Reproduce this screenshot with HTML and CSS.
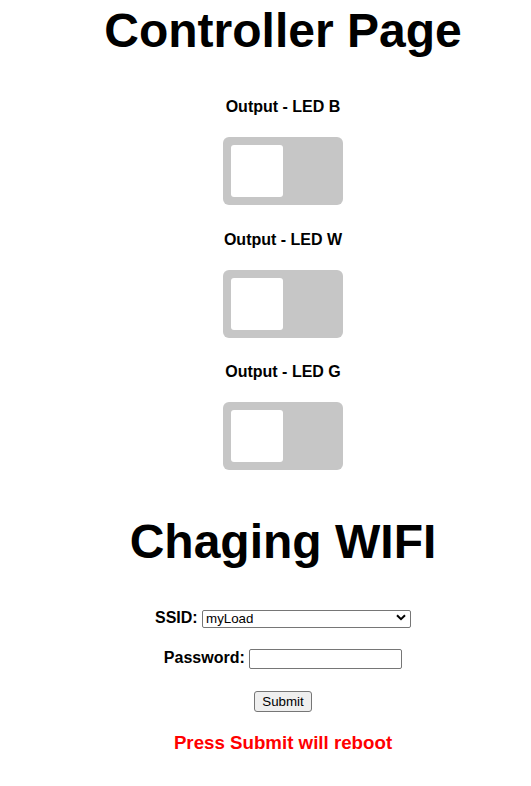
FILE: index.html
```html
<!DOCTYPE html>
<html>
<head>
<meta charset="utf-8">
<title>Controller Page</title>
<link rel="stylesheet" href="styles.css">
</head>
<body>
<div class="page">
  <h2 class="title title-top">Controller Page</h2>

  <h4 class="output-label">Output - LED B</h4>
  <label class="switch"><input type="checkbox" class="switch-input"><span class="slider"></span></label>

  <h4 class="output-label">Output - LED W</h4>
  <label class="switch"><input type="checkbox" class="switch-input"><span class="slider"></span></label>

  <h4 class="output-label">Output - LED G</h4>
  <label class="switch"><input type="checkbox" class="switch-input"><span class="slider"></span></label>

  <h2 class="title title-wifi">Chaging WIFI</h2>

  <form class="wifi-form">
    <div class="row row-ssid">
      <label class="field-label" for="ssid">SSID:</label>
      <span class="select-wrap">
        <select id="ssid" class="ssid-select"><option>myLoad</option></select>
        <svg class="chevron" width="10" height="7" viewBox="0 0 10 7"><path d="M1 1.2 L5 5.2 L9 1.2" fill="none" stroke="#000" stroke-width="2"/></svg>
      </span>
    </div>
    <div class="row row-pass">
      <label class="field-label" for="pass">Password:</label>
      <input id="pass" type="password" class="pass-input">
    </div>
    <div class="row row-submit">
      <button type="button" class="submit-btn">Submit</button>
    </div>
    <h3 class="warning">Press Submit will reboot</h3>
  </form>
</div>
</body>
</html>
```

FILE: styles.css
```css
html, body {
  margin: 0;
  padding: 0;
  background: #ffffff;
}

.page {
  padding-left: 35px;
  text-align: center;
  font-family: "Liberation Sans", Arial, sans-serif;
  color: #000000;
}

.title {
  font-size: 48px;
  font-weight: bold;
  line-height: normal;
  margin: 40px 0;
}

.title-top {
  margin-top: 3px;
}

.title-wifi {
  margin-top: 40px;
  margin-bottom: 39px;
}

.output-label {
  font-size: 16px;
  font-weight: bold;
  line-height: normal;
  margin: 21.3px 0;
}

.switch {
  position: relative;
  display: inline-block;
  width: 120px;
  height: 68px;
}

.switch-input {
  display: none;
}

.slider {
  position: absolute;
  inset: 0;
  background-color: #c6c6c6;
  border-radius: 6px;
}

.slider::before {
  content: "";
  position: absolute;
  left: 8px;
  bottom: 8px;
  width: 52px;
  height: 52px;
  background-color: #ffffff;
  border-radius: 3px;
}

.wifi-form {
  display: flex;
  flex-direction: column;
  align-items: center;
  margin: 0;
}

.row {
  display: flex;
  align-items: center;
  justify-content: center;
  gap: 4.4px;
}

.row-ssid {
  height: 20px;
}

.row-pass {
  height: 21px;
  margin-top: 20px;
}

.row-submit {
  height: 22px;
  margin-top: 21px;
}

.field-label {
  font-size: 16px;
  font-weight: bold;
  line-height: normal;
  margin-bottom: 1px;
}

.select-wrap {
  position: relative;
  display: inline-block;
  width: 209px;
  height: 18px;
}

.ssid-select {
  appearance: none;
  -webkit-appearance: none;
  box-sizing: border-box;
  width: 209px;
  height: 18px;
  margin: 0;
  padding: 0 0 0 3px;
  border: 1px solid #767676;
  border-radius: 2px;
  background: #ffffff;
  font-family: "Liberation Sans", Arial, sans-serif;
  font-size: 13.33px;
  color: #000000;
  line-height: 16px;
}

.chevron {
  position: absolute;
  right: 5px;
  top: 5px;
  pointer-events: none;
}

.pass-input {
  box-sizing: border-box;
  width: 153px;
  height: 20px;
  margin: 0;
  padding: 1px 2px;
  border: 1px solid #767676;
  border-radius: 2px;
  background: #ffffff;
  font-family: "Liberation Sans", Arial, sans-serif;
  font-size: 13.33px;
}

.submit-btn {
  box-sizing: border-box;
  width: 58px;
  height: 21px;
  margin: 0;
  padding: 1px 6px;
  border: 1px solid #767676;
  border-radius: 3px;
  background: #efefef;
  font-family: "Liberation Sans", Arial, sans-serif;
  font-size: 13.33px;
  color: #000000;
}

.warning {
  font-size: 18.72px;
  font-weight: bold;
  line-height: normal;
  color: #ff0000;
  margin: 19.3px 0 0 0;
}
```
